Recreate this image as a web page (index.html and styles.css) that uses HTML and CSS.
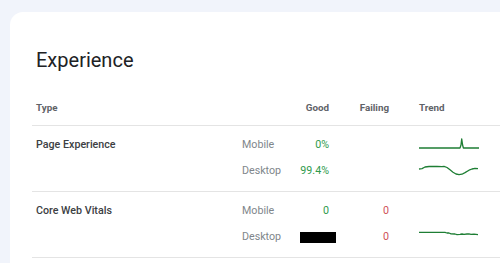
FILE: index.html
```html
<!DOCTYPE html>
<html>
<head>
<meta charset="utf-8">
<link rel="stylesheet" href="styles.css">
</head>
<body>
<div class="card">
  <h1 class="title">Experience</h1>
  <div class="table">
    <div class="row head">
      <div class="c-type">Type</div>
      <div class="c-dev"></div>
      <div class="c-good">Good</div>
      <div class="c-fail">Failing</div>
      <div class="c-trend">Trend</div>
    </div>
    <div class="row group">
      <div class="c-type name">Page Experience</div>
      <div class="c-dev dev">Mobile</div>
      <div class="c-good good">0%</div>
      <div class="c-fail fail"></div>
      <div class="c-trend"><svg class="spark" viewBox="0 0 60 14" width="60" height="14"><polyline points="0,10 41,10 42,7 42.7,0.8 43.6,7 44.4,10 60,10"/></svg></div>
      <div class="c-type"></div>
      <div class="c-dev dev">Desktop</div>
      <div class="c-good good">99.4%</div>
      <div class="c-fail fail"></div>
      <div class="c-trend"><svg class="spark" viewBox="0 0 60 14" width="60" height="14"><polyline points="0,5 3,4.6 6,3 10,2.5 18,2.5 23,2.6 25,2.3 28,3.5 31,5.8 34,8.2 37,10 40,10.6 43,10.2 46,8.6 50,6.2 53,5 56,4.4 59,4.7"/></svg></div>
    </div>
    <div class="row group">
      <div class="c-type name">Core Web Vitals</div>
      <div class="c-dev dev">Mobile</div>
      <div class="c-good good">0</div>
      <div class="c-fail fail">0</div>
      <div class="c-trend"></div>
      <div class="c-type"></div>
      <div class="c-dev dev">Desktop</div>
      <div class="c-good"><span class="redact"></span></div>
      <div class="c-fail fail">0</div>
      <div class="c-trend"><svg class="spark" viewBox="0 0 60 14" width="60" height="14"><polyline points="0,2.4 26,2.4 28,3 30,3 32,3.8 36,4 38,4.6 41,4.4 43,4 45,4.4 48,4 50,3.9 52,4.3 55,4.2 59,4.6"/></svg></div>
    </div>
  </div>
</div>
</body>
</html>
```
FILE: styles.css
```css
* { box-sizing: border-box; }
html, body { margin: 0; padding: 0; }
body {
  background: #f1f4fb;
  font-family: Roboto, "Noto Sans", Arial, sans-serif;
  padding: 12px 0 0 10px;
  height: 263px;
  overflow: hidden;
}
.card {
  background: #fff;
  border-radius: 13px 0 0 0;
  padding: 36px 0 0 22px;
  min-height: 260px;
}
.title {
  margin: 0;
  font-size: 20px;
  line-height: 24px;
  font-weight: 400;
  color: #202124;
  padding-left: 4px;
}
.table { margin-top: 30px; }
.row {
  display: grid;
  grid-template-columns: 210px 54px 33px 60px 90px;
  border-bottom: 1px solid #e4e4e4;
}
.head {
  font-size: 9.8px;
  line-height: 12px;
  font-weight: 700;
  color: #5f6368;
  padding: 0 0 9px 0;
}
.group {
  font-size: 10.7px;
  line-height: 14px;
  padding: 12px 0 13px 0;
  row-gap: 12px;
}
.c-type { padding-left: 4px; }
.c-good, .c-fail { text-align: right; }
.c-trend { padding-left: 30px; height: 14px; }
.name { color: #3c4043; font-weight: 500; }
.dev { color: #80868b; }
.good { color: #2f9a4c; }
.fail { color: #cf5159; }
.spark { display: block; overflow: visible; }
.spark polyline {
  fill: none;
  stroke: #1e7e34;
  stroke-width: 1.3;
  stroke-linejoin: round;
}
.redact {
  display: inline-block;
  width: 36px;
  height: 11px;
  background: #000;
  vertical-align: top;
  margin-top: 1.5px;
  margin-right: -7px;
}
```
